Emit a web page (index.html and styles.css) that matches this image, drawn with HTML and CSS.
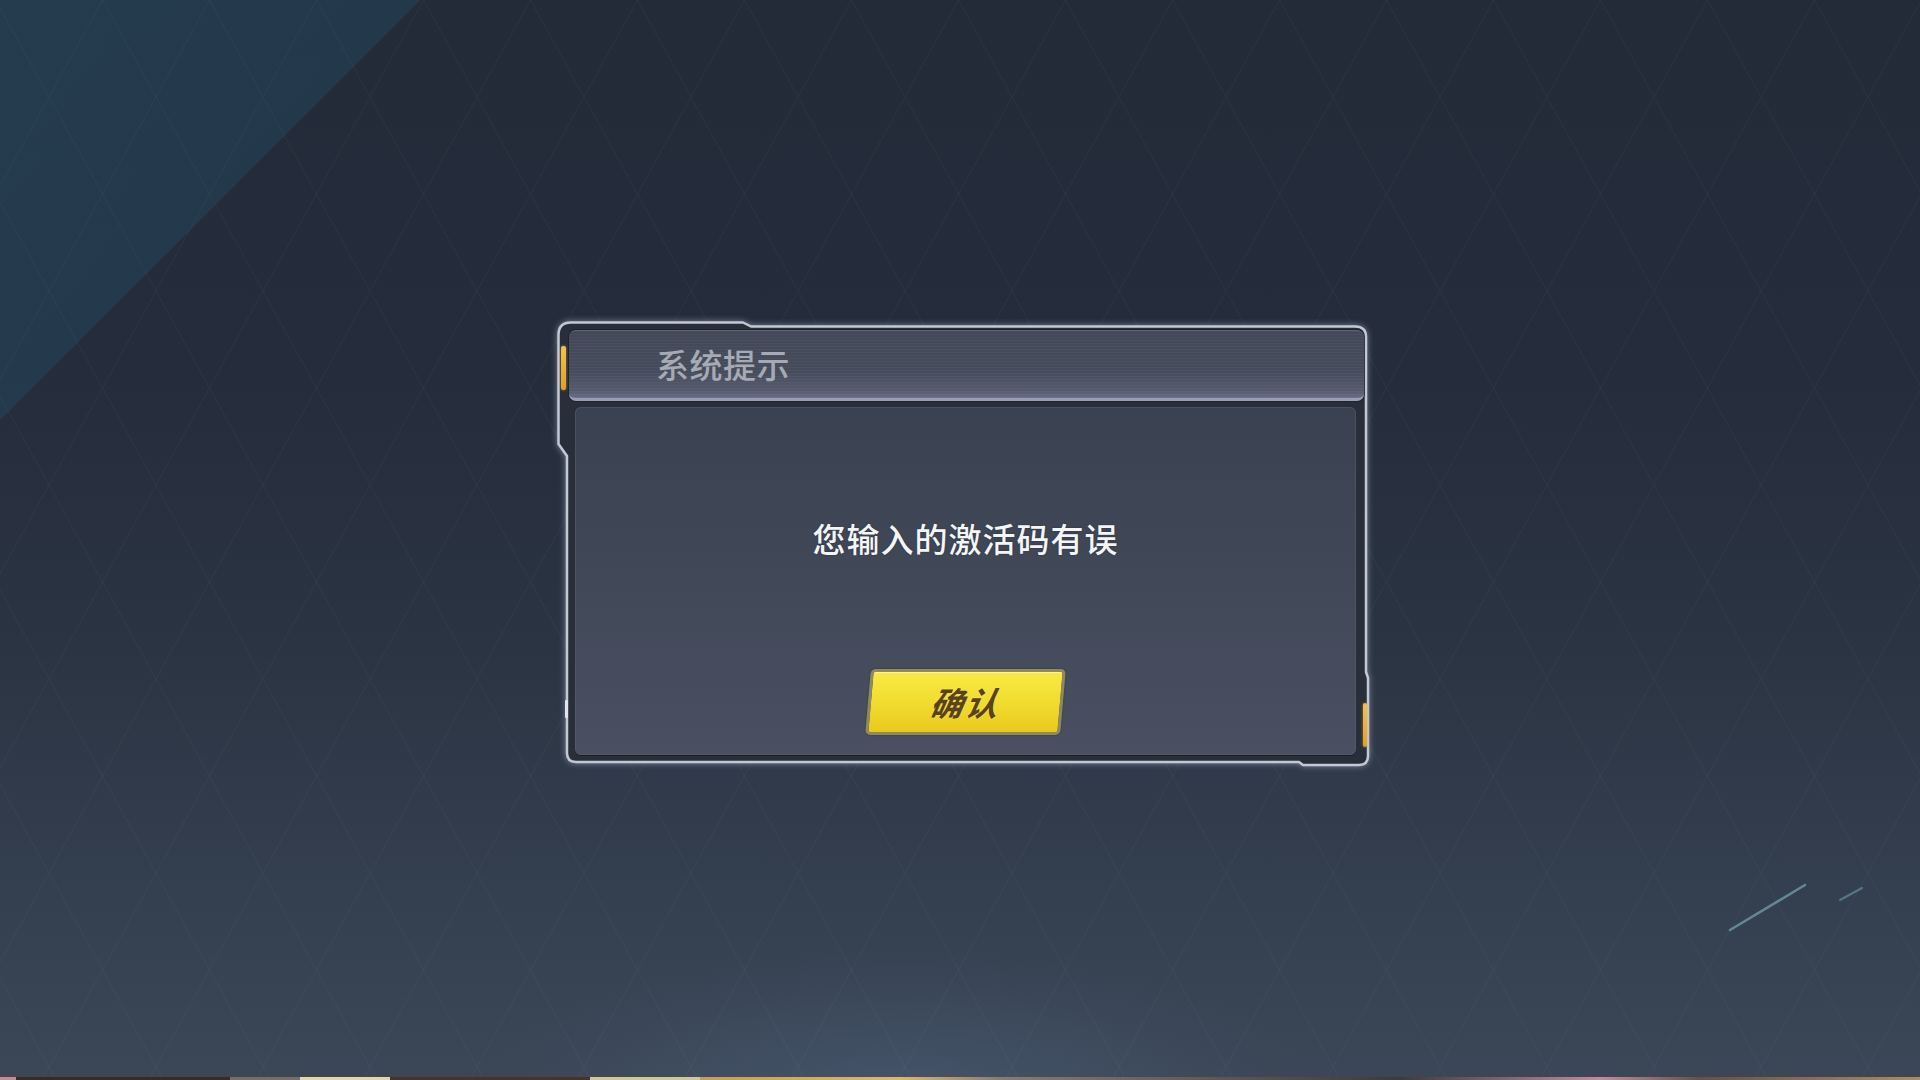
FILE: index.html
```html
<!DOCTYPE html>
<html lang="zh-CN">
<head>
<meta charset="utf-8">
<title>系统提示</title>
<link rel="stylesheet" href="styles.css">
</head>
<body>
<div class="scene">
  <svg class="streaks" width="200" height="80" viewBox="0 0 200 80">
    <line x1="10" y1="60" x2="85" y2="15" stroke="#6f9aa6" stroke-width="2.5" stroke-linecap="round" opacity="0.8"/>
    <line x1="120" y1="30" x2="142" y2="18" stroke="#6f9aa6" stroke-width="2" stroke-linecap="round" opacity="0.6"/>
  </svg>

  <div class="dialog">
    <svg class="frame" width="812" height="446" viewBox="0 0 812 446">
      <path d="M1.5 14 Q1.5 1.5 14 1.5 L186 1.5 L194 5.5 L798 5.5 Q809 5.5 809 16 L809 351 L811 357 L811 435 Q811 444 802 444 L746 444 L742 441 L19 441 Q10 441 10 432 L10 135 L1.5 123 Z"
            fill="#282e3a" stroke="#c4c8d3" stroke-width="2.5" stroke-linejoin="round"/>
    </svg>
    <span class="accent accent-left"></span>
    <span class="accent accent-right"></span>
    <span class="edge-glint"></span>

    <div class="dialog-header">
      <h1 class="dialog-title">系统提示</h1>
    </div>
    <div class="dialog-body">
      <p class="message">您输入的激活码有误</p>
      <button class="confirm"><span class="confirm-label">确认</span></button>
    </div>
  </div>

  <div class="bottom-strip"></div>
</div>
</body>
</html>
```

FILE: styles.css
```css
html, body {
  margin: 0;
  padding: 0;
  width: 100%;
  height: 100%;
  overflow: hidden;
}

body {
  font-family: "Noto Sans CJK SC", "Noto Sans", sans-serif;
  background-color: #262f3e;
}

.scene {
  position: relative;
  width: 1920px;
  height: 1080px;
  display: flex;
  align-items: center;
  justify-content: center;
  background:
    url("data:image/svg+xml,%3Csvg xmlns='http://www.w3.org/2000/svg' width='107' height='194'%3E%3Cpath d='M0 0 L107 194 M107 0 L0 194' stroke='%23ffffff' stroke-opacity='0.03' stroke-width='1' fill='none'/%3E%3C/svg%3E") 49px 97px / 107px 194px repeat,
    linear-gradient(135deg, rgba(38, 82, 108, 0.42) 0, rgba(36, 78, 104, 0.36) 297px, rgba(0, 0, 0, 0) 297px),
    radial-gradient(ellipse 420px 140px at 900px 1090px, rgba(90, 115, 150, 0.3), rgba(90, 115, 150, 0) 100%),
    linear-gradient(180deg, #232b39 0%, #252d3c 35%, #2b3443 60%, #354050 85%, #3b4656 100%);
}

.streaks {
  position: absolute;
  left: 1720px;
  top: 870px;
}

.dialog {
  position: relative;
  z-index: 0;
  width: 812px;
  height: 446px;
  margin: 7px 0 0 6px;
  padding: 9px 0 0 12px;
  box-sizing: border-box;
}

.frame {
  position: absolute;
  z-index: -1;
  left: 0;
  top: 0;
  overflow: visible;
  filter: drop-shadow(0 0 3px rgba(190, 200, 225, 0.55));
}

.accent {
  position: absolute;
  width: 5px;
  height: 44px;
  border-radius: 2px;
  background: linear-gradient(180deg, #f3c24a, #e0a02c);
  box-shadow: 0 0 3px rgba(240, 180, 60, 0.6);
}

.accent-left {
  left: 4px;
  top: 25px;
}

.accent-right {
  left: 806px;
  top: 382px;
  width: 4px;
}

.edge-glint {
  position: absolute;
  left: 8px;
  top: 379px;
  width: 3px;
  height: 18px;
  background: #e2e5ec;
  border-radius: 1px;
}

.dialog-header {
  position: relative;
  width: 795px;
  height: 71px;
  box-sizing: border-box;
  display: flex;
  align-items: center;
  padding-left: 87px;
  border-radius: 7px;
  border-top: 1px solid #5d6374;
  border-bottom: 3px solid #9a9db4;
  background:
    repeating-linear-gradient(180deg, rgba(255, 255, 255, 0.035) 0, rgba(255, 255, 255, 0.035) 1px, rgba(0, 0, 0, 0) 1px, rgba(0, 0, 0, 0) 3px),
    linear-gradient(180deg, #424857 0%, #464c5b 60%, #565b70 90%, #6a6e86 100%);
  box-shadow: 0 0 0 1px rgba(20, 24, 32, 0.5);
}

.dialog-title {
  margin: 0;
  font-size: 33px;
  font-weight: 500;
  line-height: 40px;
  color: #a6aab5;
  letter-spacing: 0.5px;
}

.dialog-body {
  width: 781px;
  height: 348px;
  margin: 6px 0 0 6px;
  box-sizing: border-box;
  display: flex;
  flex-direction: column;
  align-items: center;
  padding-top: 111px;
  border-radius: 6px;
  background: linear-gradient(180deg, #3a4151 0%, #414858 50%, #4a5061 100%);
  box-shadow: inset 0 0 0 1px rgba(90, 96, 112, 0.5), 0 1px 0 rgba(15, 18, 25, 0.6);
}

.message {
  margin: 0;
  font-size: 33px;
  font-weight: 500;
  line-height: 40px;
  color: #f4f5f7;
  letter-spacing: 1px;
  text-shadow: 0 0 2px rgba(0, 0, 0, 0.35);
}

.confirm {
  margin-top: 111px;
  width: 195px;
  height: 66px;
  padding: 0;
  display: flex;
  align-items: center;
  justify-content: center;
  border: 3px solid #8e8a5c;
  border-radius: 5px;
  transform: skewX(-5deg);
  background: linear-gradient(180deg, #f8ea43 0%, #f2dc30 50%, #e9c91c 100%);
  box-shadow: inset 0 1px 0 rgba(255, 255, 255, 0.5), 0 0 2px rgba(0, 0, 0, 0.4);
  font-family: "Noto Sans CJK SC", "Noto Sans", sans-serif;
  cursor: pointer;
}

.confirm-label {
  font-size: 33px;
  font-weight: 700;
  line-height: 40px;
  color: #5b4319;
  font-style: italic;
  transform: skewX(-6deg);
  letter-spacing: 2px;
  text-shadow: 0 0 2px rgba(255, 240, 150, 0.6);
}

.bottom-strip {
  position: absolute;
  left: 0;
  bottom: 0;
  width: 1920px;
  height: 3px;
  background: linear-gradient(90deg, #c98a8a 0, #c98a8a 16px, #3a2a22 16px, #3a2a22 230px, #7a6d63 230px, #7a6d63 300px, #e6d6a5 300px, #e6d6a5 390px, #4a3322 390px, #4a3322 590px, #d8c48f 590px, #d8c48f 700px, #c99a55 700px, #e0b46a 900px, #8d7a6a 1000px, #3e3a3a 1400px, #c48a9a 1600px, #6a5040 1700px, #b08a60 1920px);
}
```
